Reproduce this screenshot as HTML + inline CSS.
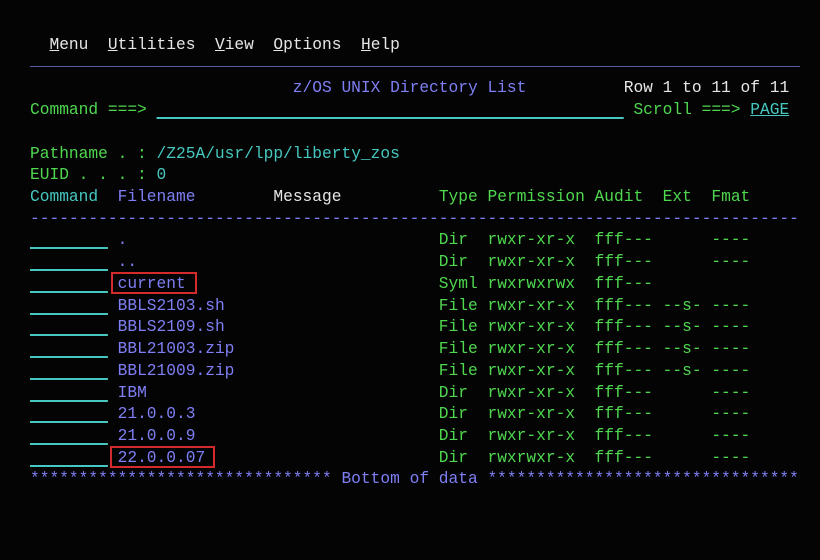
<!DOCTYPE html><html><head><style>
body{margin:0;background:#040404;width:820px;height:560px;overflow:hidden}
pre{position:absolute;left:30px;top:34px;margin:0;font-family:"Liberation Mono",monospace;font-size:16.23px;line-height:21.72px;color:#4fd84f;letter-spacing:0}
.w{color:#e6e6e6}.b{color:#7f7ff5}.t{color:#46c8c0}.g{color:#4fd84f}
.u{text-decoration:underline}
.f{text-decoration:underline;text-decoration-color:#46c8c0;text-decoration-thickness:2px;text-underline-offset:3px}
.box{position:absolute;border:2px solid #d42a2a}
.sep{position:absolute;left:30px;top:66px;width:770px;height:1px;background:#5a5aa8}
</style></head><body>
<div class="sep"></div>
<pre class="g"><span class="w">  <span class="u">M</span>enu  <span class="u">U</span>tilities  <span class="u">V</span>iew  <span class="u">O</span>ptions  <span class="u">H</span>elp</span>

<span class="b">                           z/OS UNIX Directory List</span>          <span class="w">Row 1 to 11 of 11</span>
Command ===> <span class="t f">                                                </span> Scroll ===> <span class="t u">PAGE</span>

Pathname . : <span class="t">/Z25A/usr/lpp/liberty_zos</span>
EUID . . . : <span class="t">0</span>
<span class="t">Command</span>  <span class="b">Filename</span>        <span class="w">Message</span>          Type Permission Audit  Ext  Fmat
<span class="b">-------------------------------------------------------------------------------</span>
<span class="t f">        </span> <span class="b">.</span>                                Dir  rwxr-xr-x  fff---      ----
<span class="t f">        </span> <span class="b">..</span>                               Dir  rwxr-xr-x  fff---      ----
<span class="t f">        </span> <span class="b">current</span>                          Syml rwxrwxrwx  fff---
<span class="t f">        </span> <span class="b">BBLS2103.sh</span>                      File rwxr-xr-x  fff--- --s- ----
<span class="t f">        </span> <span class="b">BBLS2109.sh</span>                      File rwxr-xr-x  fff--- --s- ----
<span class="t f">        </span> <span class="b">BBL21003.zip</span>                     File rwxr-xr-x  fff--- --s- ----
<span class="t f">        </span> <span class="b">BBL21009.zip</span>                     File rwxr-xr-x  fff--- --s- ----
<span class="t f">        </span> <span class="b">IBM</span>                              Dir  rwxr-xr-x  fff---      ----
<span class="t f">        </span> <span class="b">21.0.0.3</span>                         Dir  rwxr-xr-x  fff---      ----
<span class="t f">        </span> <span class="b">21.0.0.9</span>                         Dir  rwxr-xr-x  fff---      ----
<span class="t f">        </span> <span class="b">22.0.0.07</span>                        Dir  rwxrwxr-x  fff---      ----
<span class="b">******************************* Bottom of data ********************************</span></pre>
<div class="box" style="left:111px;top:272px;width:82px;height:18px"></div>
<div class="box" style="left:110px;top:446px;width:101px;height:18px"></div>
</body></html>
